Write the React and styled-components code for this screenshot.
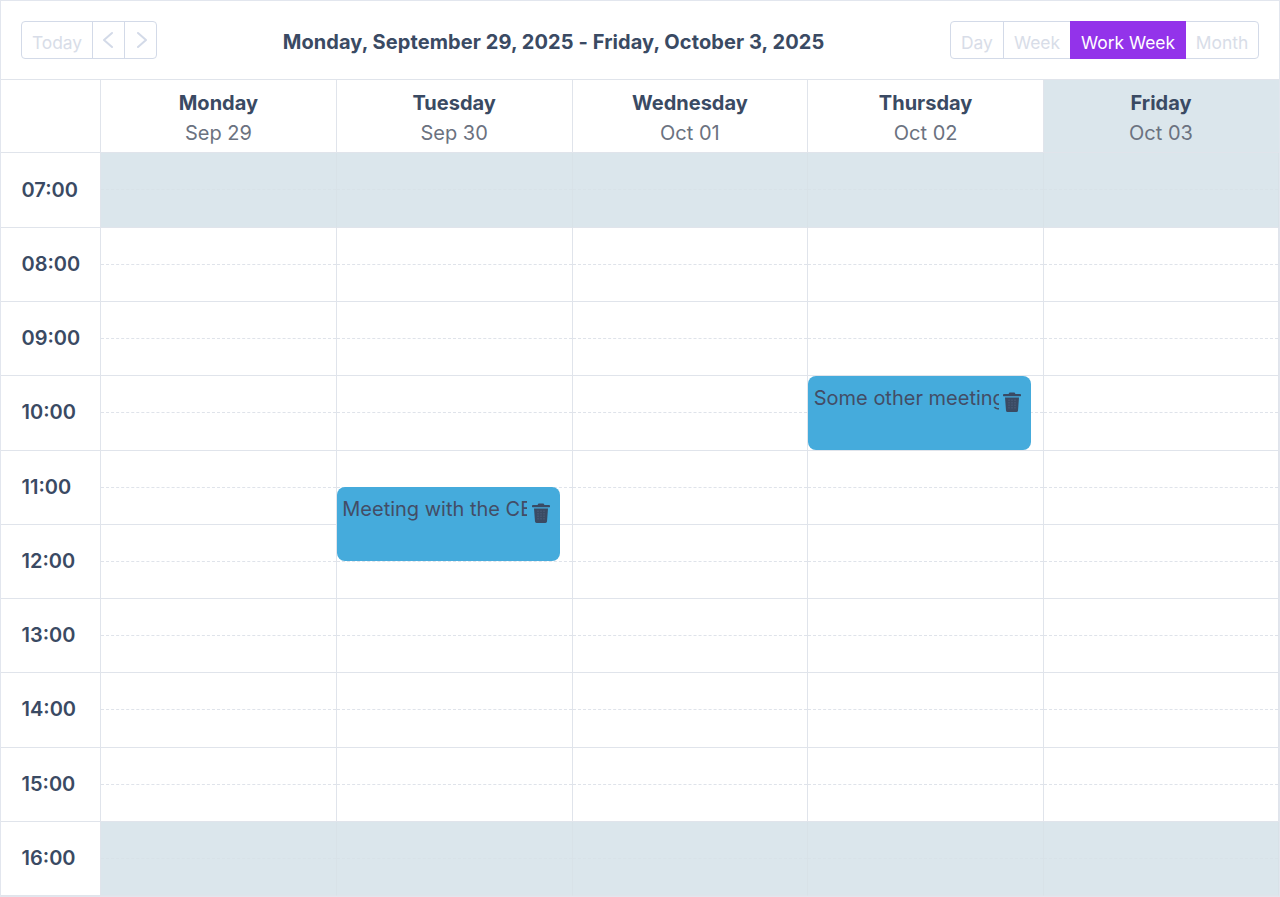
import React from 'react';
import styled, { createGlobalStyle } from 'styled-components';

const GlobalStyle = createGlobalStyle`
    html, body { margin: 0; padding: 0; background: #fff; }
    body { font-family: Inter, "Liberation Sans", sans-serif; color: #3a4a63; }
`;

const Calendar = styled.div`
    width: 1280px;
    height: 897px;
    box-sizing: border-box;
    border: 1px solid #e2e6ee;
    overflow: hidden;
`;

const Toolbar = styled.div`
    height: 79px;
    box-sizing: border-box;
    padding: 20px 20px 0;
    display: flex;
    align-items: flex-start;
    justify-content: space-between;
    border-bottom: 1px solid #e0e4eb;
`;

const ButtonGroup = styled.div`
    display: flex;
    height: 38px;
    box-sizing: border-box;
    border: 1px solid #d3dae8;
    border-radius: 4px;
`;

const ToolButton = styled.button`
    width: ${(p) => p.$w}px;
    height: ${(p) => (p.$active ? 'calc(100% + 2px)' : '100%')};
    margin: ${(p) => (p.$active ? '-1px 0' : '0')};
    box-sizing: border-box;
    padding: 4px 0 0;
    display: flex;
    align-items: center;
    justify-content: center;
    border: 0;
    border-left: ${(p) => (p.$divider ? '1px solid #d3dae8' : '0')};
    background: ${(p) => (p.$active ? '#9333ea' : 'transparent')};
    color: ${(p) => (p.$active ? '#fff' : '#d8dde8')};
    font-family: inherit;
    font-size: 17.4px;
`;

const ArrowButton = styled(ToolButton)`
    padding: 0;
    color: #d3dae8;
`;

const RangeTitle = styled.div`
    font-size: 20px;
    font-weight: 700;
    letter-spacing: 0.08px;
    line-height: 42px;
    color: #3a4a63;
`;

const HeaderRow = styled.div`
    display: grid;
    grid-template-columns: 100px repeat(4, 235.75px) 1fr;
    height: 73px;
    box-sizing: border-box;
    border-bottom: 1px solid #e0e4eb;
`;

const Corner = styled.div`
    border-right: 1px solid #e0e4eb;
`;

const DayHead = styled.div`
    display: flex;
    flex-direction: column;
    align-items: center;
    padding-top: 9px;
    box-sizing: border-box;
    background: ${(p) => (p.$off ? '#dbe6ec' : '#fff')};
    border-right: 1px solid ${(p) => (p.$off ? '#dbe6ec' : '#e0e4eb')};
`;

const DayName = styled.div`
    font-size: 20px;
    font-weight: 700;
    line-height: 28px;
`;

const DayDate = styled.div`
    font-size: 20px;
    line-height: 33px;
    color: #6b7280;
`;

const Body = styled.div`
    display: grid;
    grid-template-columns: 100px repeat(4, 235.75px) 1fr;
`;

const Column = styled.div`
    position: relative;
`;

const TimeCell = styled.div`
    height: 74.25px;
    box-sizing: border-box;
    padding-left: 20.5px;
    padding-top: 23px;
    font-size: 20px;
    font-weight: 600;
    line-height: 27px;
    border-right: 1px solid #e0e4eb;
    border-bottom: 1px solid #e0e4eb;

    &:first-child {
        height: 74.75px;
        padding-top: 24px;
    }
`;

const Slot = styled.div`
    height: 74.25px;
    box-sizing: border-box;
    background: ${(p) => (p.$off ? '#dbe6ec' : '#fff')};
    border-right: 1px solid ${(p) => (p.$off ? '#d8e2e8' : '#e0e4eb')};
    border-bottom: 1px solid #e0e4eb;

    &:first-child {
        height: 74.75px;
    }
`;

const HalfHour = styled.div`
    height: 37px;
    box-sizing: border-box;
    border-bottom: 1px dashed ${(p) => (p.$off ? '#d8e2e8' : '#dfe3ea')};
`;

const Event = styled.div`
    position: absolute;
    left: 0;
    top: ${(p) => p.$top}px;
    width: 223px;
    height: 74px;
    box-sizing: border-box;
    padding: 8px 5px 8px 5.5px;
    display: flex;
    align-items: flex-start;
    background: #45abdc;
    border-radius: 8px;
`;

const EventTitle = styled.div`
    width: 185px;
    font-size: 20px;
    line-height: 28px;
    color: #434d66;
    white-space: nowrap;
    overflow: hidden;
`;

const TrashSvg = styled.svg`
    flex: none;
    width: 18px;
    height: 20px;
    margin: 8px 0 0 4.500px;
`;

const ChevronLeft = () => (
    <svg width="12" height="18" viewBox="0 0 12 18" fill="none" stroke="currentColor" strokeWidth="2" strokeLinecap="round" strokeLinejoin="round">
        <polyline points="9,2 1,9 9,16" />
    </svg>
);

const ChevronRight = () => (
    <svg width="12" height="18" viewBox="0 0 12 18" fill="none" stroke="currentColor" strokeWidth="2" strokeLinecap="round" strokeLinejoin="round">
        <polyline points="3,2 11,9 3,16" />
    </svg>
);

const TrashIcon = () => (
    <TrashSvg viewBox="0 0 18 20">
        <path d="M5.5 2 6.5.4h5L12.5 2H17a1 1 0 0 1 0 2.2H1A1 1 0 0 1 1 2z" fill="#3a4a63" />
        <path d="M2 5.5h14l-1 13a1.6 1.6 0 0 1-1.6 1.5H4.6A1.6 1.6 0 0 1 3 18.500z" fill="#3a4a63" />
        <path d="M6 7.500v10M9 7.500v10M12 7.500v10" stroke="#4d5f7d" strokeWidth="1" strokeDasharray="1.500 1" />
    </TrashSvg>
);

const days = [
    { name: 'Monday', date: 'Sep 29' },
    { name: 'Tuesday', date: 'Sep 30', event: { title: 'Meeting with the CEO', top: 334 } },
    { name: 'Wednesday', date: 'Oct 01' },
    { name: 'Thursday', date: 'Oct 02', event: { title: 'Some other meeting', top: 223 } },
    { name: 'Friday', date: 'Oct 03', off: true },
];

const hours = ['07:00', '08:00', '09:00', '10:00', '11:00', '12:00', '13:00', '14:00', '15:00', '16:00'];

const App = () => {
    return (
        <Calendar>
            <GlobalStyle />
            <Toolbar>
                <ButtonGroup>
                    <ToolButton $w={70}>Today</ToolButton>
                    <ArrowButton $w={32} $divider><ChevronLeft /></ArrowButton>
                    <ArrowButton $w={32} $divider><ChevronRight /></ArrowButton>
                </ButtonGroup>
                <RangeTitle>Monday, September 29, 2025 - Friday, October 3, 2025</RangeTitle>
                <ButtonGroup>
                    <ToolButton $w={52}>Day</ToolButton>
                    <ToolButton $w={67} $divider>Week</ToolButton>
                    <ToolButton $w={116} $active>Work Week</ToolButton>
                    <ToolButton $w={72}>Month</ToolButton>
                </ButtonGroup>
            </Toolbar>
            <HeaderRow>
                <Corner />
                {days.map((d) => (
                    <DayHead key={d.name} $off={d.off}>
                        <DayName>{d.name}</DayName>
                        <DayDate>{d.date}</DayDate>
                    </DayHead>
                ))}
            </HeaderRow>
            <Body>
                <Column>
                    {hours.map((h) => <TimeCell key={h}>{h}</TimeCell>)}
                </Column>
                {days.map((d) => (
                    <Column key={d.name}>
                        {hours.map((h, i) => {
                            const off = i === 0 || i === hours.length - 1;
                            return (
                                <Slot key={h} $off={off}>
                                    <HalfHour $off={off} />
                                </Slot>
                            );
                        })}
                        {d.event && (
                            <Event $top={d.event.top}>
                                <EventTitle>{d.event.title}</EventTitle>
                                <TrashIcon />
                            </Event>
                        )}
                    </Column>
                ))}
            </Body>
        </Calendar>
    );
};

export default App;
